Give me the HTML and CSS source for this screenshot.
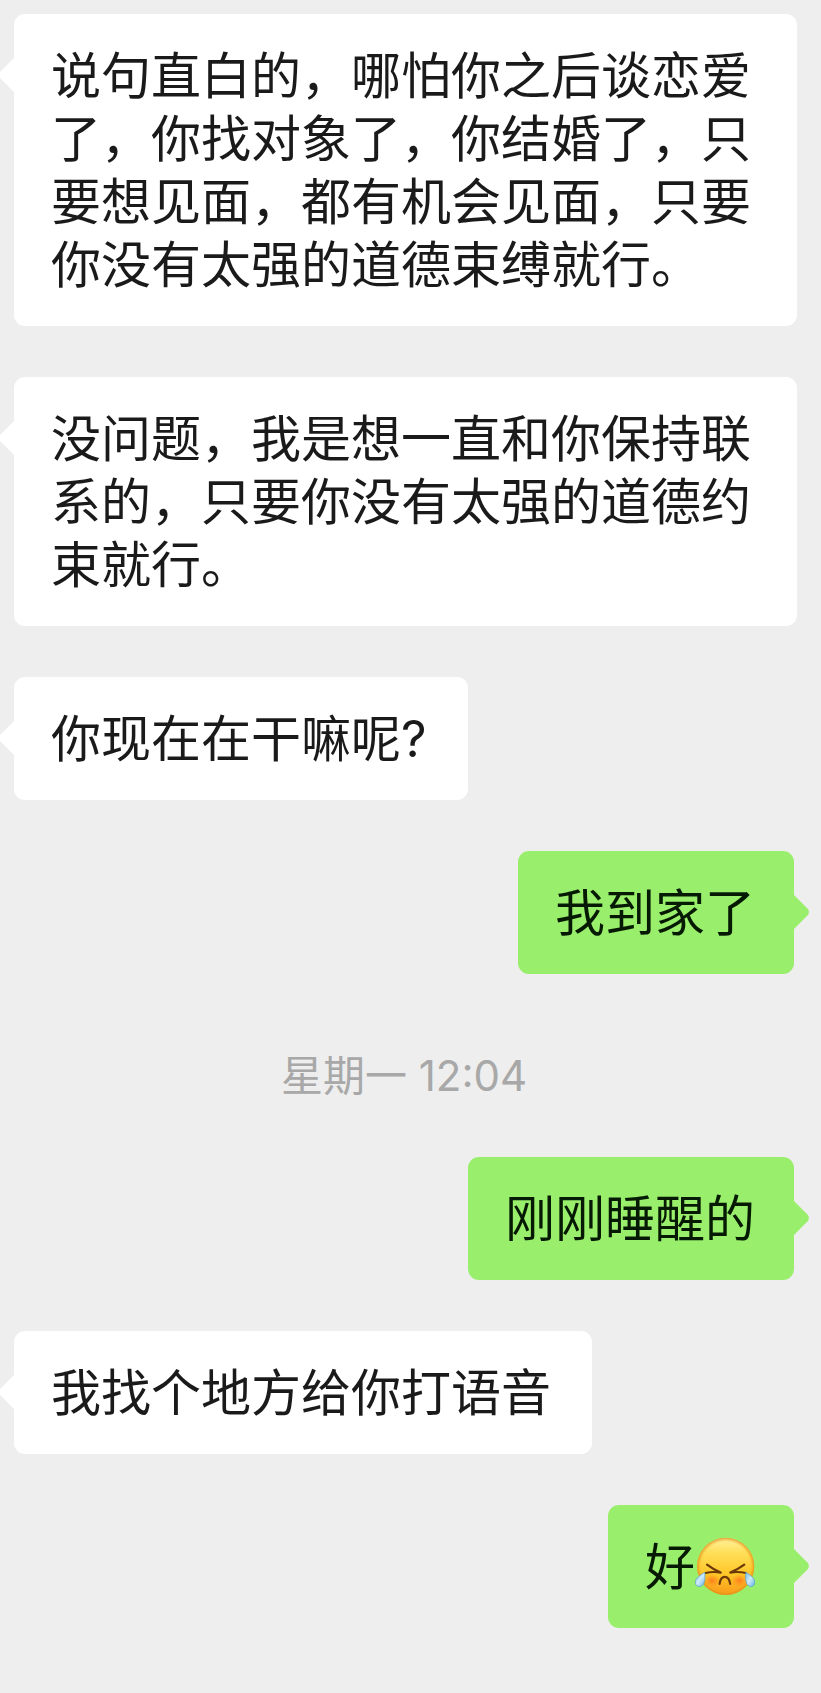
FILE: index.html
```html
<!DOCTYPE html>
<html lang="zh-CN">
<head>
<meta charset="utf-8">
<meta name="viewport" content="width=device-width, initial-scale=1">
<title>聊天</title>
<link rel="stylesheet" href="styles.css">
</head>
<body>
<main class="chat">
  <p class="bubble received">说句直白的，哪怕你之后谈恋爱了，你找对象了，你结婚了，只要想见面，都有机会见面，只要你没有太强的道德束缚就行。</p>
  <p class="bubble received">没问题，我是想一直和你保持联系的，只要你没有太强的道德约束就行。</p>
  <p class="bubble received">你现在在干嘛呢?</p>
  <p class="bubble sent">我到家了</p>
  <time class="timestamp">星期一 12:04</time>
  <p class="bubble sent">刚刚睡醒的</p>
  <p class="bubble received">我找个地方给你打语音</p>
  <p class="bubble sent">好<svg class="emoji" viewBox="1 1 60 63" role="img" aria-label="哭">
    <defs>
      <linearGradient id="face" x1="0" y1="0" x2="0" y2="1">
        <stop offset="0" stop-color="#fff0a0"/>
        <stop offset=".25" stop-color="#ffe05a"/>
        <stop offset=".65" stop-color="#ffc526"/>
        <stop offset="1" stop-color="#f99a1c"/>
      </linearGradient>
      <radialGradient id="rim">
        <stop offset=".86" stop-color="#f2a51c" stop-opacity="0"/>
        <stop offset="1" stop-color="#dc8a18" stop-opacity=".8"/>
      </radialGradient>
      <radialGradient id="blush">
        <stop offset="0" stop-color="#ff6a1c" stop-opacity=".75"/>
        <stop offset="1" stop-color="#ff7a1c" stop-opacity="0"/>
      </radialGradient>
      <linearGradient id="tear" x1="0" y1="0" x2="1" y2="1">
        <stop offset="0" stop-color="#7dbde8"/>
        <stop offset=".5" stop-color="#cdebfb"/>
        <stop offset="1" stop-color="#62aee6"/>
      </linearGradient>
    </defs>
    <circle cx="31.7" cy="31.4" r="28.6" fill="url(#face)"/>
    <circle cx="31.7" cy="31.4" r="28.6" fill="url(#rim)"/>
    <ellipse cx="18" cy="45.5" rx="8" ry="6.5" fill="url(#blush)"/>
    <ellipse cx="45.5" cy="45.5" rx="8" ry="6.5" fill="url(#blush)"/>
    <g fill="none" stroke="#6b3a08" stroke-width="2.2" stroke-linecap="round" stroke-linejoin="round">
      <path d="M13 29.7Q20 35 26.7 37.6Q19 36.2 11.5 38"/>
      <path d="M50.3 29.7Q43 35 36.3 37.6Q44 36.2 51.8 38"/>
      <path d="M25.6 48.8C26.8 39.5 34.8 39.5 36.2 48.8"/>
    </g>
    <path d="M10.8 37.5C6.5 39.5 1.3 43.5 1.3 47.2C1.3 50.2 3.5 51.7 5.7 51.5C11 51 11.3 44 10.8 37.5Z" fill="url(#tear)" stroke="#559fcf" stroke-width=".7"/>
    <path d="M51.8 37.5C56.3 39.5 60.7 43.5 60.7 47.2C60.7 50.2 58.9 51.7 56.7 51.5C51.6 51 51.2 44 51.8 37.5Z" fill="url(#tear)" stroke="#559fcf" stroke-width=".7"/>
  </svg></p>
</main>
</body>
</html>
```
FILE: styles.css
```css
* {
  box-sizing: border-box;
}

body {
  margin: 0;
  min-height: 100vh;
  background: #eeeeee;
  color: #1a1a1a;
  font-family: Inter, "Noto Sans CJK SC", sans-serif;
  overflow-x: hidden;
}

.chat {
  display: flex;
  flex-direction: column;
  gap: 51px;
  padding: 14px 27px 65px 14px;
}

.bubble {
  position: relative;
  margin: 0;
  padding: 31px 39px 29px 37px;
  border-radius: 11px;
  font-size: 50px;
  line-height: 63px;
}

.bubble::before {
  content: "";
  position: absolute;
  top: 49px;
  width: 24px;
  height: 24px;
  background: inherit;
  transform: rotate(45deg);
}

.received {
  align-self: flex-start;
  margin-right: -3px;
  padding-right: 41px;
  background: #ffffff;
}

.received::before {
  left: -12px;
  border-bottom-left-radius: 5px;
}

.sent {
  align-self: flex-end;
  background: #99ef6c;
  color: #061a03;
}

.sent::before {
  right: -12px;
  border-top-right-radius: 5px;
}

.timestamp {
  align-self: center;
  padding: 26px 0 5px;
  color: #a8a8a8;
  font-size: 42px;
  line-height: 50px;
}

.emoji {
  display: inline-block;
  width: 60px;
  height: 63px;
  vertical-align: top;
}
```
